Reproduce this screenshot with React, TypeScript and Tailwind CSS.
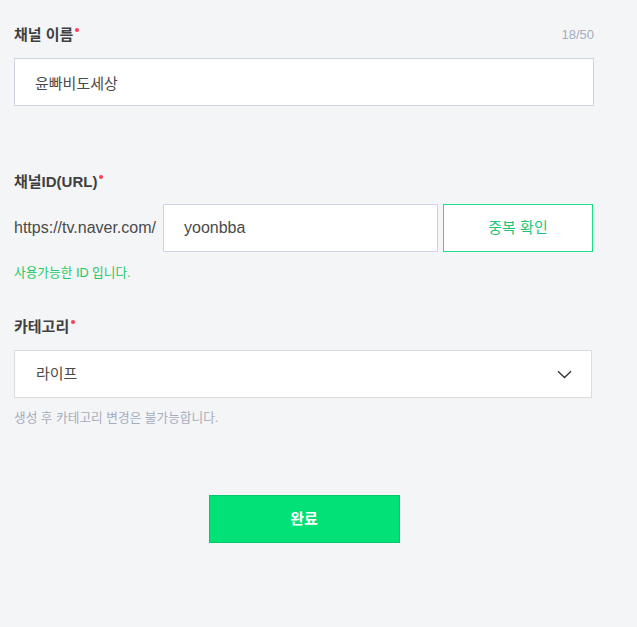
import { useState } from 'react'

const font = { fontFamily: '"Liberation Sans", "Noto Sans CJK KR", sans-serif' }

function Required() {
  return <span className="ml-[2px] inline-block h-[4px] w-[4px] self-start mt-[3px] rounded-full bg-[#ff3b57]" />
}

function Label({ children }: { children: React.ReactNode }) {
  return (
    <div className="flex h-[20px] items-center text-[15px] font-bold leading-[20px] text-[#404040]">
      {children}
      <Required />
    </div>
  )
}

export default function App() {
  const [name, setName] = useState('윤빠비도세상')
  const [channelId, setChannelId] = useState('yoonbba')

  return (
    <div className="min-h-[627px] w-full bg-[#f4f5f7]" style={font}>
      <div className="ml-[14px] w-[580px] pt-[25px]">
        {/* 채널 이름 */}
        <div className="flex items-center justify-between">
          <Label>채널 이름</Label>
          <span className="text-[13px] leading-[20px] text-[#a5adbd]">{name.length * 3}/50</span>
        </div>
        <input
          value={name}
          onChange={(e) => setName(e.target.value)}
          className="mt-[13px] block h-[48px] w-[580px] border border-[#cdd3df] bg-white px-5 text-[15px] text-[#4a4a4a] outline-none"
        />

        {/* 채널ID */}
        <div className="mt-[66px]">
          <Label>채널ID(URL)</Label>
        </div>
        <div className="mt-[12px] flex h-[48px] items-center">
          <span className="w-[149px] shrink-0 text-[16px] text-[#4a4a4a]">https://tv.naver.com/</span>
          <input
            value={channelId}
            onChange={(e) => setChannelId(e.target.value)}
            className="block h-[48px] w-[275px] border border-[#cdd3df] bg-white px-5 text-[16px] text-[#4a4a4a] outline-none"
          />
          <button className="ml-[5px] h-[48px] w-[150px] border border-[#1fe08a] bg-white text-[15px] text-[#1dc777]">
            중복 확인
          </button>
        </div>
        <p className="mt-[13px] text-[12.7px] leading-[16px] text-[#1cc964]">사용가능한 ID 입니다.</p>

        {/* 카테고리 */}
        <div className="mt-[36px]">
          <Label>카테고리</Label>
        </div>
        <div className="mt-[13px] flex h-[48px] w-[578px] items-center justify-between border border-[#dcdcdc] bg-white pl-[21px] pr-[19px]">
          <span className="text-[15px] text-[#4a4a4a]">라이프</span>
          <svg width="15" height="9" viewBox="0 0 15 9" fill="none">
            <polyline points="1,1.2 7.5,7.5 14,1.2" stroke="#333" strokeWidth="1.3" />
          </svg>
        </div>
        <p className="mt-[12px] text-[12.7px] leading-[16px] text-[#a5adbd]">생성 후 카테고리 변경은 불가능합니다.</p>

        <div className="mt-[69px] flex justify-center">
          <button className="h-[48px] w-[191px] border border-[#00c96b] bg-[#00e277] text-[15px] font-bold text-white">
            완료
          </button>
        </div>
      </div>
    </div>
  )
}
